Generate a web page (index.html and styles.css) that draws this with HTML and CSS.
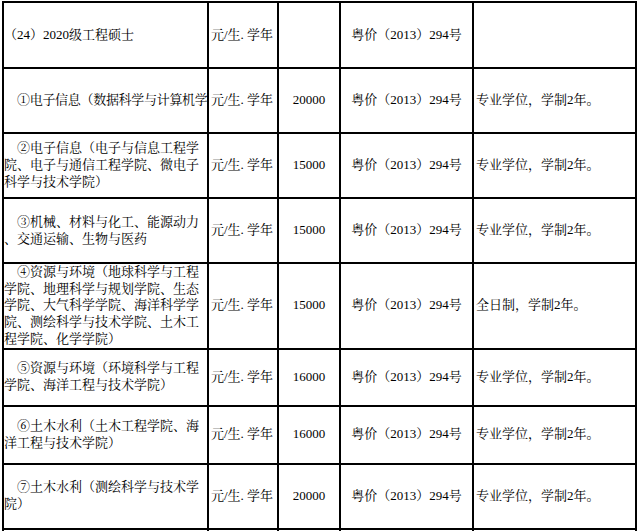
FILE: index.html
```html
<!DOCTYPE html>
<html lang="zh-CN">
<head>
<meta charset="utf-8">
<title>收费表</title>
<link rel="stylesheet" href="styles.css">
</head>
<body>
<div class="wrap">
<table class="fees">
  <colgroup>
    <col class="c1"><col class="c2"><col class="c3"><col class="c4"><col class="c5">
  </colgroup>
  <tr class="r1">
    <td class="name plain">（24）2020级工程硕士</td>
    <td class="unit">元/生. 学年</td>
    <td class="num"></td>
    <td class="doc">粤价（2013）294号</td>
    <td class="note"></td>
  </tr>
  <tr class="r2">
    <td class="name clip">①电子信息（数据科学与计算机学</td>
    <td class="unit">元/生. 学年</td>
    <td class="num">20000</td>
    <td class="doc">粤价（2013）294号</td>
    <td class="note">专业学位，学制2年。</td>
  </tr>
  <tr class="r3">
    <td class="name">②电子信息（电子与信息工程学<br>院、电子与通信工程学院、微电子<br>科学与技术学院）</td>
    <td class="unit">元/生. 学年</td>
    <td class="num">15000</td>
    <td class="doc">粤价（2013）294号</td>
    <td class="note">专业学位，学制2年。</td>
  </tr>
  <tr class="r4">
    <td class="name">③机械、材料与化工、能源动力<br>、交通运输、生物与医药</td>
    <td class="unit">元/生. 学年</td>
    <td class="num">15000</td>
    <td class="doc">粤价（2013）294号</td>
    <td class="note">专业学位，学制2年。</td>
  </tr>
  <tr class="r5">
    <td class="name">④资源与环境（地球科学与工程<br>学院、地理科学与规划学院、生态<br>学院、大气科学学院、海洋科学学<br>院、测绘科学与技术学院、土木工<br>程学院、化学学院）</td>
    <td class="unit">元/生. 学年</td>
    <td class="num">15000</td>
    <td class="doc">粤价（2013）294号</td>
    <td class="note">全日制，学制2年。</td>
  </tr>
  <tr class="r6">
    <td class="name">⑤资源与环境（环境科学与工程<br>学院、海洋工程与技术学院）</td>
    <td class="unit">元/生. 学年</td>
    <td class="num">16000</td>
    <td class="doc">粤价（2013）294号</td>
    <td class="note">专业学位，学制2年。</td>
  </tr>
  <tr class="r7">
    <td class="name">⑥土木水利（土木工程学院、海<br>洋工程与技术学院）</td>
    <td class="unit">元/生. 学年</td>
    <td class="num">16000</td>
    <td class="doc">粤价（2013）294号</td>
    <td class="note">专业学位，学制2年。</td>
  </tr>
  <tr class="r8">
    <td class="name">⑦土木水利（测绘科学与技术学<br>院）</td>
    <td class="unit">元/生. 学年</td>
    <td class="num">20000</td>
    <td class="doc">粤价（2013）294号</td>
    <td class="note">专业学位，学制2年。</td>
  </tr>
  <tr class="r9">
    <td class="name"></td>
    <td class="unit"></td>
    <td class="num"></td>
    <td class="doc"></td>
    <td class="note"></td>
  </tr>
</table>
</div>
</body>
</html>
```

FILE: styles.css
```css
html, body {
  margin: 0;
  padding: 0;
  background: #fff;
  overflow: hidden;
}

.wrap {
  padding: 1px 0 0 2px;
}

.fees {
  border-collapse: separate;
  border-spacing: 0;
  table-layout: fixed;
  width: 635px;
  border-left: 2px solid #000;
  border-top: 2px solid #000;
  font-family: "Liberation Serif", "Noto Serif CJK SC", "Noto Sans CJK SC", serif;
  font-size: 13px;
  line-height: 16.7px;
  color: #000;
}

.c1 { width: 205px; }
.c2 { width: 70px; }
.c3 { width: 62px; }
.c4 { width: 133px; }
.c5 { width: 163px; }

.fees td {
  box-sizing: border-box;
  border-right: 2px solid #000;
  border-bottom: 2px solid #000;
  padding: 0;
  vertical-align: middle;
  white-space: nowrap;
}

.name {
  text-align: left;
  text-indent: 13px;
  overflow: hidden;
}

.name.plain {
  text-indent: 0;
}

.name.clip {
  letter-spacing: -0.3px;
}

.unit {
  padding-left: 2px !important;
}

.num {
  text-align: center;
}

.doc {
  text-align: center;
}

.note {
  padding-left: 2px !important;
}

.r1 { height: 66px; }
.r2 { height: 65px; }
.r3 { height: 65px; }
.r4 { height: 65px; }
.r5 { height: 85px; }
.r6 { height: 57px; }
.r7 { height: 58px; }
.r8 { height: 65px; }
.r9 { height: 40px; }
```
